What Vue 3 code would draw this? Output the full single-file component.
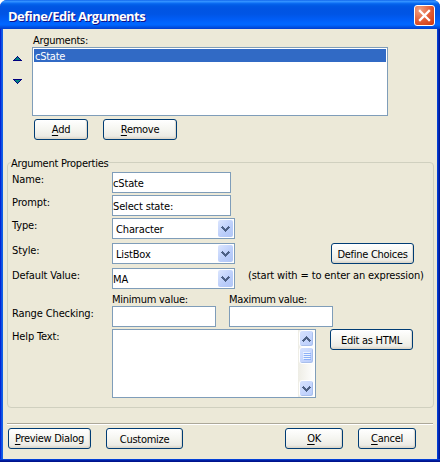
<script setup>
const rows = [
  { id: 'name', label: 'Name:', value: 'cState', kind: 'text' },
  { id: 'prompt', label: 'Prompt:', value: 'Select state:', kind: 'text' },
  { id: 'type', label: 'Type:', value: 'Character', kind: 'combo' },
  { id: 'style', label: 'Style:', value: 'ListBox', kind: 'combo', action: 'Define Choices' },
  { id: 'default', label: 'Default Value:', value: 'MA', kind: 'combo', note: '(start with = to enter an expression)' }
]
</script>

<template>
  <div class="window">
    <header class="titlebar">
      <h1>Define/Edit Arguments</h1>
      <button class="close" aria-label="Close">
        <svg width="21" height="21" viewBox="0 0 21 21"><path d="M6 6L15 15M15 6L6 15" stroke="#fff" stroke-width="2.3" stroke-linecap="square" /></svg>
      </button>
    </header>
    <main class="body">
      <section class="arguments">
        <div class="movers">
          <svg width="9" height="5" viewBox="0 0 9 5" shape-rendering="crispEdges"><path d="M4 0h1v1h1v1h1v1h1v1h1v1H0V4h1V3h1V2h1V1h1z" fill="#000080" /><path d="M4 1h1v1h1v1h1v1H2V3h1V2h1z" fill="#008080" /></svg>
          <svg width="9" height="5" viewBox="0 0 9 5" shape-rendering="crispEdges"><path d="M0 0h9v1H8v1H7v1H6v1H5v1H4V4H3V3H2V2H1V1H0z" fill="#000080" /><path d="M2 1h5v1H6v1H5v1H4V3H3V2H2z" fill="#008080" /></svg>
        </div>
        <div class="argcol">
          <div class="args-caption">Arguments:</div>
          <div class="listbox"><div class="selected">cState</div></div>
          <div class="argbuttons">
            <button class="btn add"><span><u>A</u>dd</span></button>
            <button class="btn remove"><span><u>R</u>emove</span></button>
          </div>
        </div>
      </section>

      <section class="group">
        <div class="legend"><span>Argument Properties</span></div>
        <div v-for="r in rows" :key="r.id" class="row" :class="r.id">
          <div class="label">{{ r.label }}</div>
          <div class="field" :class="r.kind">
            <span class="value">{{ r.value }}</span>
            <span v-if="r.kind === 'combo'" class="drop">
              <svg width="9" height="6" viewBox="0 0 9 6" shape-rendering="crispEdges"><path d="M0 1h1V0h1v1h1v1h1v1h1V2h1V1h1V0h1v1h1v1H8v1H7v1H6v1H5v1H4V5H3V4H2V3H1V2H0z" fill="#4d6185" /></svg>
            </span>
          </div>
          <button v-if="r.action" class="btn low define"><span>{{ r.action }}</span></button>
          <span v-if="r.note" class="note">{{ r.note }}</span>
        </div>
        <div class="heads"><span class="min">Minimum value:</span><span class="max">Maximum value:</span></div>
        <div class="row range">
          <div class="label">Range Checking:</div>
          <div class="field small"></div>
          <div class="field small"></div>
        </div>
        <div class="row help">
          <div class="label">Help Text:</div>
          <div class="memo">
            <div class="scroll">
              <span class="sb"><svg width="9" height="6" viewBox="0 0 9 6" shape-rendering="crispEdges"><path d="M0 4h1V3h1V2h1V1h1V0h1v1h1v1h1v1h1v1h1v1H8v1H7V5H6V4H5V3H4v1H3v1H2v1H1V5H0z" fill="#4d6185" /></svg></span>
              <span class="sb thumb"><i></i><i></i><i></i><i></i></span>
              <span class="track"></span>
              <span class="sb"><svg width="9" height="6" viewBox="0 0 9 6" shape-rendering="crispEdges"><path d="M0 1h1V0h1v1h1v1h1v1h1V2h1V1h1V0h1v1h1v1H8v1H7v1H6v1H5v1H4V5H3V4H2V3H1V2H0z" fill="#4d6185" /></svg></span>
            </div>
          </div>
          <button class="btn low html"><span>Edit as HTML</span></button>
        </div>
      </section>

      <footer class="footer">
        <button class="btn preview"><span><u>P</u>review Dialog</span></button>
        <button class="btn low customize"><span>Customize</span></button>
        <button class="btn ok"><span><u>O</u>K</span></button>
        <button class="btn cancel"><span><u>C</u>ancel</span></button>
      </footer>
    </main>
  </div>
</template>

<style>
body { background: #fff; }
</style>

<style scoped>
* { box-sizing: border-box; }
.window {
  width: 440px; height: 462px; padding: 0 3px 3px; overflow: hidden;
  border-radius: 7px 7px 0 0;
  background: linear-gradient(90deg, #0019cf 0, #0831d9 1px, #166aee 2px, #0855dd 3px, #0855dd 437px, #0441d8 437px, #0036cc 438px, #001ea0 439px, #00138c 440px);
  box-shadow: inset 0 -1px #00138c, inset 0 -2px #001ea0, inset 0 -3px #0441d8;
  font: 11px/14px "DejaVu Sans Condensed", "DejaVu Sans", sans-serif;
  color: #000; white-space: nowrap; letter-spacing: -0.25px;
}
.titlebar {
  height: 29px; margin: 0 -3px; padding: 5px 5px 0 8px; display: flex; justify-content: space-between;
  background: linear-gradient(#0058e6 0, #3a93ff 1px, #288eff 2px, #1270f5 3px, #0364ec 4px, #0058e4 6px, #0054e3 9px, #0055e5 14px, #005cf5 19px, #0066ff 23px, #0066ff 25px, #005bef 26px, #0048d8 28px, #003dd0 29px);
}
h1 { margin: 0; font: 700 13px/22px "Open Sans", sans-serif; letter-spacing: -0.53px; color: #fff; text-shadow: 1px 1px #0f1089; }
.close { width: 21px; height: 21px; padding: 0; border: 1px solid #fff; border-radius: 3px; background: radial-gradient(circle at 25% 20%, #f0a183, #e3603a 50%, #cf3308); display: flex; align-items: center; justify-content: center; }
.close svg { flex: none; }
.body { height: 430px; background: #ece9d8; }
.arguments { display: flex; height: 129px; }
.movers { width: 29px; padding: 27px 0 0 10px; display: flex; flex-direction: column; gap: 18px; }
.argcol { width: 356px; padding-top: 4px; }
.args-caption { padding-left: 1px; height: 14px; line-height: 16px; }
.listbox { height: 69px; border: 1px solid #7f9db9; background: #fff; padding: 1px; }
.selected { height: 13px; line-height: 16px; padding-left: 1px; background: #316ac5; color: #fff; }
.argbuttons { display: flex; gap: 15px; padding: 3px 0 0 2px; }
.btn {
  height: 21px; padding: 0; flex: none; border: 1px solid #003c74; border-radius: 3px; font: inherit; letter-spacing: -0.28px; color: #000;
  background: linear-gradient(#fff, #f5f5f0 50%, #ecebe5 85%, #d9d4c9); box-shadow: inset -1px -1px 1px #dcd7cb;
  display: flex; justify-content: center; align-items: flex-start; line-height: 19px;
}
.btn.low { line-height: 21px; }
.btn u { text-underline-offset: 2px; text-decoration-thickness: 1px; text-decoration-skip-ink: none; }
.add { width: 54px; }
.remove { width: 74px; }
.group { width: 427px; height: 246px; margin: 4px 0 0 4px; border: 1px solid #d0d0bf; border-radius: 4px; padding-left: 4px; }
.legend { height: 9px; }
.legend span { display: inline-block; background: #ece9d8; line-height: 14px; margin-left: -1px; transform: translateY(-6px); }
.row { display: flex; height: 23px; }
.type, .style { height: 25px; }
.default { height: 23px; }
.label { width: 100px; flex: none; line-height: 16px; letter-spacing: -0.13px; }
.field { width: 119px; height: 21px; border: 1px solid #7f9db9; background: #fff; line-height: 22px; letter-spacing: -0.15px; flex: none; display: flex; justify-content: space-between; }
.field.combo { width: 123px; padding: 1px; line-height: 20px; }
.type .value, .style .value { padding-left: 2px; }
.default .value { margin-left: -1px; }
.drop { width: 15px; height: 17px; border-radius: 2px; background: linear-gradient(135deg, #dce6fe, #bacdfa 60%, #b0c5f5); display: flex; align-items: center; justify-content: center; }
.define { width: 83px; margin-left: 96px; }
.note { margin-left: 13px; line-height: 16px; letter-spacing: -0.14px; }
.heads { height: 15px; padding-left: 100px; display: flex; padding-top: 1px; line-height: 16px; }
.min { width: 117px; }
.max { letter-spacing: -0.33px; }
.field.small { width: 104px; margin-right: 13px; }
.help { height: 69px; }
.memo { width: 204px; height: 69px; border: 1px solid #7f9db9; background: #fff; display: flex; justify-content: flex-end; }
.scroll { width: 17px; display: flex; flex-direction: column; background: linear-gradient(90deg, #eeede5, #fff); padding: 0 1px; }
.sb { height: 17px; flex: none; border: 1px solid #fff; border-radius: 3px; background: linear-gradient(135deg, #d6e2ff, #b7cbfb); box-shadow: inset -1px -1px #a9bfec; display: flex; align-items: center; justify-content: center; }
.thumb { flex-direction: column; gap: 1px; }
.thumb i { width: 7px; height: 1px; background: #eef4fe; box-shadow: 1px 1px #8cb0f8; }
.track { flex: 1; }
.html { width: 83px; margin-left: 14px; }
.footer { margin: 15px 4px 0; height: 28px; border-top: 1px solid #aca899; box-shadow: inset 0 1px #fff; padding: 4px 0 0 1px; display: flex; }
.preview { width: 83px; }
.customize { width: 77px; margin-left: 15px; }
.ok { width: 58px; margin-left: 102px; }
.cancel { width: 58px; margin-left: 15px; }
</style>
